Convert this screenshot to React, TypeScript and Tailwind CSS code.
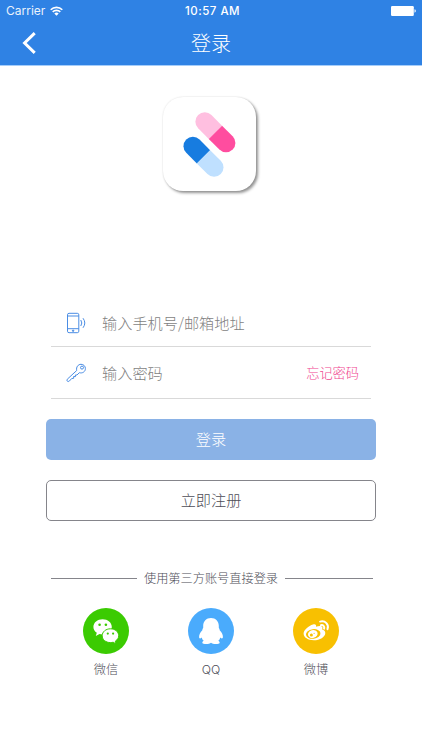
import React from 'react';

function StatusBar() {
  return (
    <div className="grid h-[22px] grid-cols-3 items-center font-['Inter','Liberation_Sans',sans-serif] text-[11.5px] leading-none text-white">
      <div className="flex items-center gap-[5px] pl-[6px]">
        <span className="text-[12px] opacity-90">Carrier</span>
        <svg width="13" height="10" viewBox="0 0 13 10" fill="none" stroke="white" strokeWidth="1.6">
          <path d="M.7 3.8a8.2 8.2 0 0 1 11.6 0M2.7 5.9a5.4 5.4 0 0 1 7.6 0" />
          <path d="M4.3 7.5a3.1 3.1 0 0 1 4.4 0L6.5 9.7z" fill="white" stroke="none" />
        </svg>
      </div>
      <span className="pl-[3px] pt-[2px] text-center font-medium tracking-[0.5px]">10:57 AM</span>
      <svg className="mr-[6px] justify-self-end" width="25" height="10" viewBox="0 0 25 10" fill="white">
        <rect width="22.8" height="10" rx="1.2" />
        <path d="M23.5 3.3q1.3.3 1.3 1.7t-1.3 1.7z" />
      </svg>
    </div>
  );
}

function Header() {
  return (
    <header className="h-[66px] border-b border-[#a5cdfa] bg-[#2f82e4]">
      <StatusBar />
      <div className="grid h-[41px] grid-cols-[60px_1fr_60px] items-center">
        <svg className="ml-[22px]" width="14" height="22" viewBox="0 0 14 22" fill="none" stroke="white" strokeWidth="3">
          <path d="M12.7 1.2 2.6 11l10.1 9.8" />
        </svg>
        <h1 className="text-center text-[20px] font-light leading-none text-white">登录</h1>
      </div>
    </header>
  );
}

function Logo() {
  return (
    <div className="ml-[163px] mt-[31px] h-[94px] w-[93px] rounded-[20px] bg-white shadow-[2px_2px_3px_0px_rgba(0,0,0,0.42),0px_0px_2px_0px_rgba(0,0,0,0.12)]">
      <svg width="93" height="94" viewBox="163 97 93 94">
        <g transform="translate(215.4 132.3) rotate(45)">
          <path d="M0-9.4h-15a9.4 9.4 0 0 0 0 18.8H0z" fill="#ffbfe0" />
          <path d="M0-9.4h15a9.4 9.4 0 0 1 0 18.8H0z" fill="#ff4d9f" />
        </g>
        <g transform="translate(203.5 156.8) rotate(45)">
          <path d="M0-9.4h-15a9.4 9.4 0 0 0 0 18.8H0z" fill="#177ce0" />
          <path d="M0-9.4h15a9.4 9.4 0 0 1 0 18.8H0z" fill="#bfe0ff" />
        </g>
      </svg>
    </div>
  );
}

function PhoneIcon() {
  return (
    <svg width="20" height="22" viewBox="0 0 20 22" fill="none" stroke="#4a8de4" strokeWidth="1">
      <rect x="1.5" y="1.3" width="11.3" height="19.4" rx="1.5" />
      <path d="M1.5 4h11.3M1.5 16.7h11.3" />
      <circle cx="7.1" cy="18.7" r=".7" fill="#4a8de4" />
      <path d="M14.8 8q2 3 0 6M17 6.2q3.6 4.8 0 9.6" />
    </svg>
  );
}

function KeyIcon() {
  return (
    <svg width="20" height="20" viewBox="0 0 20 20" fill="none" stroke="#4a8de4" strokeWidth="1" strokeLinejoin="round">
      <path d="M10.7 7.5C10 3.9 12.2 1.3 15 1.3c2.5 0 4.4 1.8 4.4 4.3 0 3-2.8 5-6.1 4.1L11 12l-1.6 0 .1 1.6-1.9-.1.1 1.8-2 .2-2.4 2.6c-1.4 1.2-3.2-.4-2-1.9z" />
      <circle cx="16" cy="4.6" r="1.5" />
    </svg>
  );
}

function WeChatIcon() {
  return (
    <svg width="28" height="27" viewBox="0 0 28 27">
      <path d="M10.6 1.2C5.5 1.2 1.4 4.6 1.4 8.9c0 2.5 1.3 4.5 3.4 5.9l-1 3.2 3.7-1.9c1 .3 2 .4 3.1.4 5.1 0 9.2-3.3 9.2-7.6s-4.1-7.7-9.2-7.7z" fill="white" />
      <path d="M18.5 10.8c-4.7 0-8.3 3-8.3 6.9s3.6 6.9 8.3 6.9c.9 0 1.8-.1 2.6-.4l3 1.7-.8-2.7c2.1-1.4 3.4-3.2 3.4-5.5 0-3.9-3.6-6.9-8.2-6.9z" fill="white" stroke="#3bcb02" strokeWidth="1" />
      <g fill="#3bcb02">
        <circle cx="7.6" cy="6.7" r="1.3" />
        <circle cx="13.9" cy="6.7" r="1.3" />
        <circle cx="15.8" cy="15.6" r="1.1" />
        <circle cx="21.1" cy="15.6" r="1.1" />
      </g>
    </svg>
  );
}

function QQIcon() {
  return (
    <svg width="26" height="28" viewBox="0 0 26 28" fill="white">
      <path d="M13 .9C8.3.9 5.2 4.2 5.2 8.8v2c-.6.7-.9 1.6-.9 2.5C2 15.6 1 17.9 1.1 20.1c.1 2 1.4 1.7 2.6.3.3 1.4 1 2.5 2 3.4-1.1.5-1.5 1.3-1.3 2.1.3 1.5 7.1 1.5 8.6-.1 1.5 1.6 8.3 1.6 8.6.1.2-.8-.2-1.6-1.3-2.1 1-.9 1.7-2 2-3.4 1.2 1.4 2.5 1.7 2.6-.3.1-2.2-.9-4.5-3.2-6.8 0-.9-.3-1.8-.9-2.5v-2C20.8 4.2 17.7.9 13 .9z" />
    </svg>
  );
}

function WeiboIcon() {
  return (
    <svg width="28" height="24" viewBox="0 0 28 24" fill="none">
      <path d="M11 5.5c2-.8 3.7 0 3 2.3 2.8-1.1 6.4-1.4 6.5 1 0 .6-.2 1.1-.4 1.7 2 .5 3.2 1.6 3.2 3.4 0 4.1-5.5 7.3-11.5 7.3-5.7 0-10.2-2.7-10.2-6.7C1.6 11.1 6.7 6.7 11 5.5z" fill="white" />
      <ellipse cx="11.2" cy="14.9" rx="7.3" ry="4.8" transform="rotate(-7 11.2 14.9)" fill="#f8c001" />
      <ellipse cx="10.8" cy="15.1" rx="4.9" ry="3.9" transform="rotate(-15 10.8 15.1)" fill="white" />
      <circle cx="9.4" cy="16" r="1.5" fill="#f8c001" />
      <circle cx="12.1" cy="14.3" r=".6" fill="#f8c001" />
      <path d="M18.1 2.6c5.2-1.3 9.1 2.8 7.4 7.6M18.9 6.2c2.2-.5 3.9 1.2 3.2 3.4" stroke="white" strokeWidth="2" strokeLinecap="round" />
    </svg>
  );
}

type SocialProps = { label: string; color: string; children: React.ReactNode };

function Social({ label, color, children }: SocialProps) {
  return (
    <div className="flex w-[46px] flex-col items-center">
      <div className={`flex h-[46px] w-[46px] items-center justify-center rounded-full ${color}`}>{children}</div>
      <span className="mt-[7px] font-['Inter','Noto_Sans_CJK_SC',sans-serif] text-[12.2px] font-light leading-[18px] text-[#4d4d57]">{label}</span>
    </div>
  );
}

export default function App() {
  return (
    <main className="h-[750px] w-[422px] overflow-hidden bg-white font-['Noto_Sans_CJK_SC',sans-serif]">
      <Header />
      <Logo />
      <form className="mt-[109px] px-[46px]">
        <div className="mx-[5px] flex h-[47px] items-center border-b border-[#d9d9d9] pl-[15px]">
          <PhoneIcon />
          <span className="ml-[16px] pb-[2px] text-[15.2px] font-light text-[#7f7f7f]">输入手机号/邮箱地址</span>
        </div>
        <div className="mx-[5px] flex h-[52px] items-center border-b border-[#d9d9d9] pl-[15px] pr-[12px]">
          <KeyIcon />
          <span className="ml-[16px] pb-px text-[15.2px] font-light text-[#7f7f7f]">输入密码</span>
          <span className="ml-auto text-[13.2px] font-light text-[#f0468f]">忘记密码</span>
        </div>
        <button type="button" className="mt-[20px] block h-[41px] w-full rounded-[5px] bg-[#8ab2e6] pb-[2px] text-[15.2px] font-light text-white">登录</button>
        <button type="button" className="mt-[20px] block h-[41px] w-full rounded-[5px] border border-[#85858b] pb-[2px] text-[15.2px] font-light text-[#4d4d57]">立即注册</button>
      </form>
      <div className="ml-[51px] mt-[48px] flex h-[18px] w-[322px] items-center">
        <span className="h-px w-[86px] bg-[#85858b]" />
        <span className="ml-[7px] text-[12.2px] font-light leading-none text-[#4d4d57]">使用第三方账号直接登录</span>
        <span className="ml-auto h-px w-[88px] bg-[#85858b]" />
      </div>
      <div className="mx-[83px] mt-[21px] flex justify-between">
        <Social label="微信" color="bg-[#3bcb02]"><WeChatIcon /></Social>
        <Social label="QQ" color="bg-[#4aabfc]"><QQIcon /></Social>
        <Social label="微博" color="bg-[#f8c001]"><WeiboIcon /></Social>
      </div>
    </main>
  );
}
